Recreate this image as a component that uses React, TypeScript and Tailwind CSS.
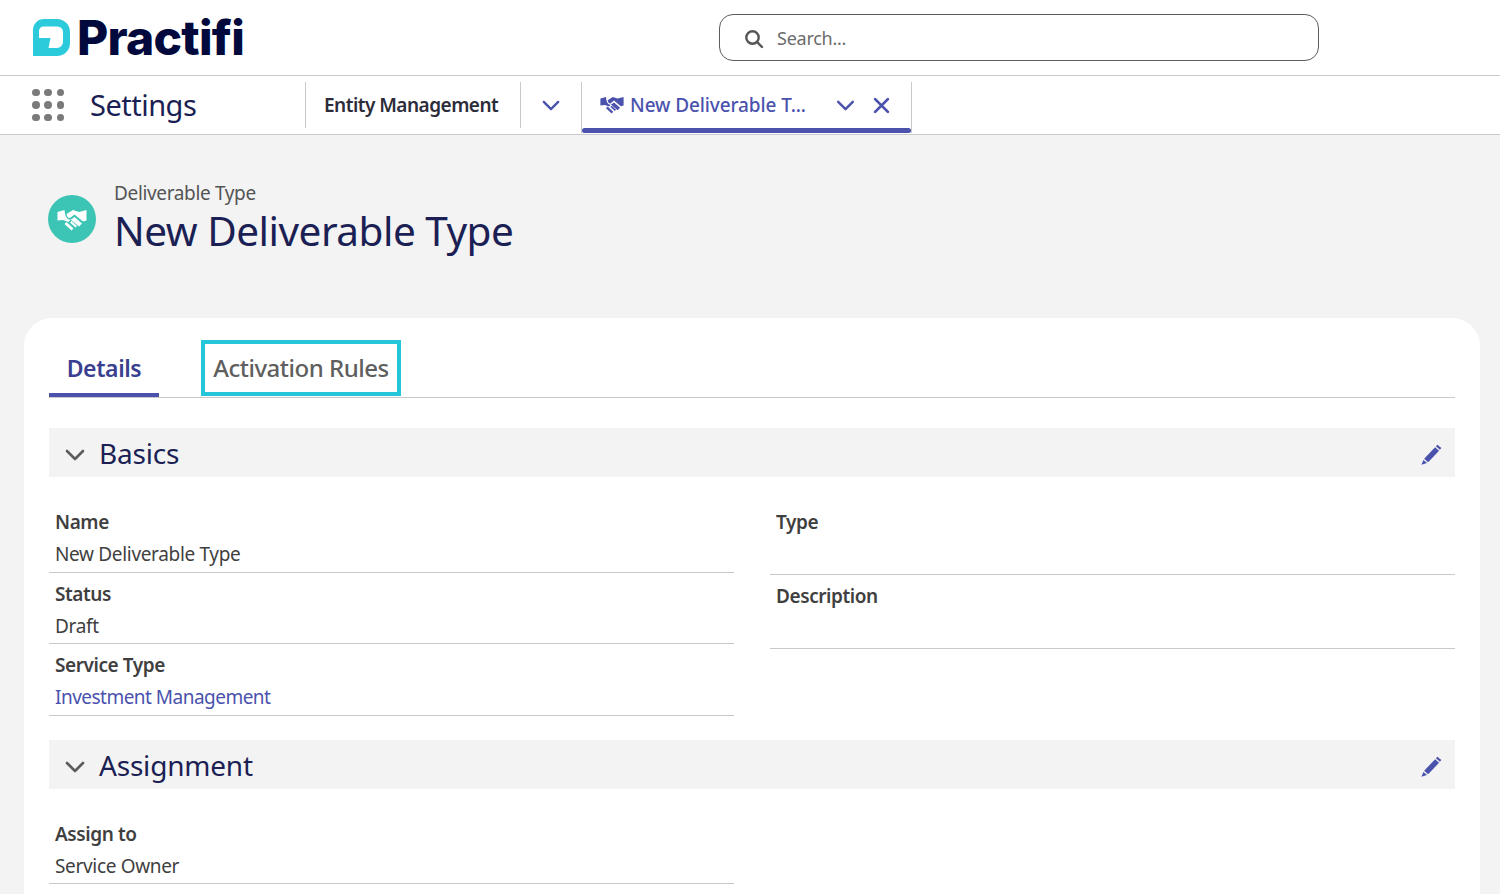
import React from "react";

function Handshake({ className }: { className: string }) {
  return (
    <svg viewBox="0 0 30 22" className={className} fill="currentColor">
      <path d="M9.5 5 L16 1 L22 3 L29.5 1 L29.5 11.5 L26 12.5 L17.5 5.5 L13 9 Q10.5 9.5 9.5 5 Z" />
      <path d="M0.5 3 L7.5 1 L8 5 Q10 11.5 14 10.5 L17.5 8 L25 14.5 L22 17.5 L13.5 10.5 L11.5 13 L6 11 L0.5 11.5 Z" />
      <path d="M7.5 15 L9.5 13 L16.5 19.5 L14.5 21.5 Z" />
      <path d="M13 13.5 L14.5 12 L20 17 L18.5 18.5 Z" />
    </svg>
  );
}

function Chevron({ className }: { className: string }) {
  return (
    <svg viewBox="0 0 20 12" className={className} fill="none" stroke="currentColor" strokeWidth="2.6" strokeLinecap="round" strokeLinejoin="round">
      <path d="M2 2 L10 10 L18 2" />
    </svg>
  );
}

function Pencil() {
  return (
    <svg viewBox="0 0 20 20" className="w-[21px] h-[21px] text-[#4a52ad]" fill="currentColor">
      <path d="M15.6 0.6 L19.4 3.9 L18 5.5 L14.2 2.2 Z" />
      <path d="M13.4 3.1 L17.2 6.4 L6.8 17.4 L3 14.1 Z" />
      <path d="M2.3 15.2 L5.7 18.2 L0.4 19.8 Z" />
    </svg>
  );
}

function Field({ label, value, link, h, labelTop }: { label: string; value?: string; link?: boolean; h: string; labelTop: string }) {
  return (
    <div className={`${h} border-b border-[#c9c9c9] px-[6px] ${labelTop}`}>
      <div className="text-[19px] leading-[26px] font-semibold text-[#3f3f3f] tracking-[-0.42px]">{label}</div>
      {value && (
        <div className={`mt-[6px] text-[19px] leading-[26px] ${link ? "text-[#4a52ad] tracking-[-0.52px]" : "text-[#3f3f3f] tracking-[-0.33px]"}`}>{value}</div>
      )}
    </div>
  );
}

function Section({ title }: { title: string }) {
  return (
    <div className="h-[49px] bg-[#f3f3f3] flex items-center pl-[16px] pr-[13px]">
      <Chevron className="w-[20px] h-[12px] mt-[5px] text-[#5c5c5c]" />
      <span className="ml-[14px] text-[28px] leading-[40px] text-[#1b1f54] tracking-[-0.2px]">{title}</span>
      <span className="ml-auto mt-[4px]"><Pencil /></span>
    </div>
  );
}

export default function App() {
  return (
    <div className="h-screen overflow-hidden bg-[#f3f3f3] flex flex-col" style={{ fontFamily: '"Noto Sans", "Open Sans", sans-serif' }}>
      <header className="h-[76px] shrink-0 bg-white border-b border-[#cacaca] flex items-center relative">
        <div className="ml-[33px] flex items-center">
          <svg viewBox="0 0 37 37" className="w-[37px] h-[37px]">
            <path fillRule="evenodd" fill="#2bcbdc" d="M11 0 H24 A13 13 0 0 1 37 13 V24 A13 13 0 0 1 24 37 H0 V11 A11 11 0 0 1 11 0 Z M10.5 7.5 A4.5 4.5 0 0 0 6 12 V19 H17.5 L15.5 29 H24 A6 6 0 0 0 30 23 V13 A5.5 5.5 0 0 0 24.5 7.5 Z" />
          </svg>
          <span className="ml-[7px] mt-[1px] text-[48px] leading-[50px] font-extrabold text-[#02093c] tracking-[-0.75px]" style={{ fontFamily: "Inter, sans-serif" }}>Practifi</span>
        </div>
        <div className="absolute left-[719px] top-[14px] w-[600px] h-[47px] rounded-[14px] border border-[#5c5c5c] flex items-center pl-[24px]">
          <svg viewBox="0 0 20 20" className="w-[20px] h-[20px] mt-[2px] text-[#555]" fill="none" stroke="currentColor" strokeWidth="2.4" strokeLinecap="round">
            <circle cx="8.5" cy="8.5" r="6.2" />
            <path d="M13.2 13.2 L18 18" />
          </svg>
          <span className="ml-[13px] mt-[1px] text-[18px] text-[#6b6b6b] tracking-[-0.25px]">Search...</span>
        </div>
      </header>

      <nav className="h-[59px] shrink-0 bg-white border-b border-[#cacaca] flex">
        <div className="w-[305px] flex items-center pl-[32px]">
          <div className="grid grid-cols-3 gap-x-[5px] gap-y-[5px] w-[32px]">
            {Array.from({ length: 9 }).map((_, i) => (
              <div key={i} className="w-[7.5px] h-[7.5px] rounded-full bg-[#7a7a7a]" />
            ))}
          </div>
          <span className="ml-[26px] text-[29px] leading-[40px] text-[#1b1f54] tracking-[-0.5px]">Settings</span>
        </div>
        <div className="mt-[6px] mb-[6px] h-[46px] w-[215px] border-l border-[#c9c9c9] flex items-center pl-[18px]">
          <span className="text-[19px] font-semibold text-[#2c2c3a] tracking-[-0.52px]">Entity Management</span>
        </div>
        <div className="mt-[6px] h-[46px] w-[61px] border-l border-[#c9c9c9] flex items-center pl-[21px]">
          <Chevron className="w-[18px] h-[11px] text-[#4a52ad]" />
        </div>
        <div className="relative mt-[6px] h-[51px] w-[331px] border-x border-[#c9c9c9] flex items-start pt-[10px] pl-[18px] text-[#4a52ad]">
          <Handshake className="w-[24px] h-[18px] mt-[4px]" />
          <span className="ml-[6px] text-[19px] leading-[26px] font-medium tracking-[-0.1px] whitespace-nowrap">New Deliverable T...</span>
          <Chevron className="ml-[30px] mt-[8px] w-[19px] h-[11px]" />
          <svg viewBox="0 0 16 16" className="ml-[18px] mt-[5px] w-[17px] h-[17px]" fill="none" stroke="currentColor" strokeWidth="2.6" strokeLinecap="round">
            <path d="M2 2 L14 14 M14 2 L2 14" />
          </svg>
          <div className="absolute left-0 right-0 bottom-0 h-[5px] rounded-full bg-[#4a52ad]" />
        </div>
      </nav>

      <main className="flex-1 min-h-0 flex flex-col">
        <div className="h-[183px] shrink-0 flex items-start pl-[48px] pt-[60px]">
          <div className="w-[48px] h-[48px] rounded-full bg-[#3cc4b4] flex items-center justify-center text-white">
            <Handshake className="w-[30px] h-[22px] mt-[1px]" />
          </div>
          <div className="ml-[18px] -mt-[15px]">
            <div className="text-[19px] leading-[26px] text-[#555] tracking-[-0.35px]">Deliverable Type</div>
            <div className="text-[40.5px] leading-[50px] text-[#1b1f54] tracking-[-0.5px]">New Deliverable Type</div>
          </div>
        </div>

        <div className="flex-1 min-h-0 mx-[24px] w-[1456px] bg-white rounded-t-[28px] px-[25px] pt-[22px]">
          <div className="h-[58px] border-b border-[#c9c9c9] flex items-start">
            <div className="w-[110px] h-[57px] border-b-4 border-[#4a52ad] flex items-center justify-center pt-[3px] text-[23px] font-semibold text-[#3a3f8f] tracking-[-0.4px]">Details</div>
            <div className="ml-[42px] w-[200px] h-[56px] border-4 border-[#26c6da] flex items-center justify-center text-[24px] font-medium text-[#5f5f5f] tracking-[-0.48px] whitespace-nowrap">Activation Rules</div>
          </div>

          <div className="mt-[30px]"><Section title="Basics" /></div>

          <div className="grid grid-cols-2 gap-x-[36px] mt-[32px]">
            <div>
              <Field label="Name" value="New Deliverable Type" h="h-[64px]" labelTop="" />
              <Field label="Status" value="Draft" h="h-[71px]" labelTop="pt-[8px]" />
              <Field label="Service Type" value="Investment Management" link h="h-[72px]" labelTop="pt-[8px]" />
            </div>
            <div>
              <Field label="Type" h="h-[66px]" labelTop="" />
              <Field label="Description" h="h-[74px]" labelTop="pt-[8px]" />
            </div>
          </div>

          <div className="mt-[24px]"><Section title="Assignment" /></div>

          <div className="grid grid-cols-2 gap-x-[36px] mt-[32px]">
            <Field label="Assign to" value="Service Owner" h="h-[63px]" labelTop="" />
          </div>
        </div>
      </main>
    </div>
  );
}
